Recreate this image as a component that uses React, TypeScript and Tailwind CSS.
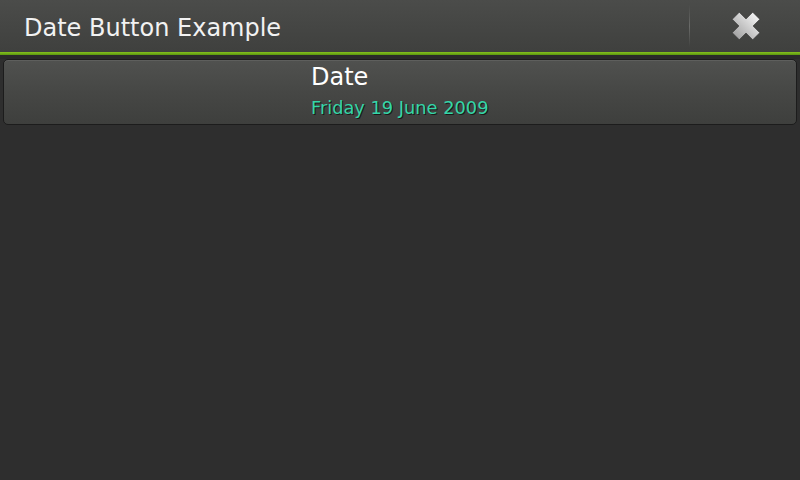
export default function App() {
  return (
    <div className="w-[800px] h-[480px] bg-[#2e2e2e] flex flex-col overflow-hidden" style={{ fontFamily: '"DejaVu Sans", sans-serif' }}>
      {/* Title bar */}
      <div className="h-[52px] flex items-stretch bg-gradient-to-b from-[#4b4c4a] to-[#3f403e]">
        <div className="flex-1 flex items-center pl-[24px] pt-[3px] text-[24px] text-[#f2f2f2]">Date Button Example</div>
        <div className="w-px my-[5px] bg-gradient-to-b from-transparent via-[#6a6b69] to-transparent" />
        <div className="w-[110px] flex items-center justify-center pl-[2px] pb-[1px]">
          <svg width="30" height="30" viewBox="0 0 30 30">
            <defs>
              <linearGradient id="xg" x1="0" y1="0" x2="0" y2="1">
                <stop offset="0" stopColor="#f2f2f2" />
                <stop offset="1" stopColor="#a4a4a4" />
              </linearGradient>
            </defs>
            <g transform="rotate(45 15 15)" fill="url(#xg)" stroke="#333" strokeWidth="0.6">
              <path d="M10 0.5 H20 V10 H29.5 V20 H20 V29.5 H10 V20 H0.5 V10 H10 Z" />
            </g>
          </svg>
        </div>
      </div>
      <div className="h-[3px] bg-gradient-to-b from-[#86c21e] to-[#5a9410]" />
      <div className="h-[4px] bg-[#2a2a2a]" />

      {/* Date button */}
      <div className="mx-[3px] h-[66px] rounded-[5px] border border-[#1c1c1c] bg-gradient-to-b from-[#50514f] via-[#464745] to-[#3e3f3d] shadow-[inset_0_1px_0_#5e5f5d] flex flex-col pl-[307px] pt-[1px]">
        <div className="text-[24px] leading-[32px] text-white">Date</div>
        <div className="mt-[3px] text-[17.8px] leading-[24px] text-[#34d6a8] [text-shadow:1px_1px_0_#1a1a1a]">Friday 19 June 2009</div>
      </div>
    </div>
  );
}
